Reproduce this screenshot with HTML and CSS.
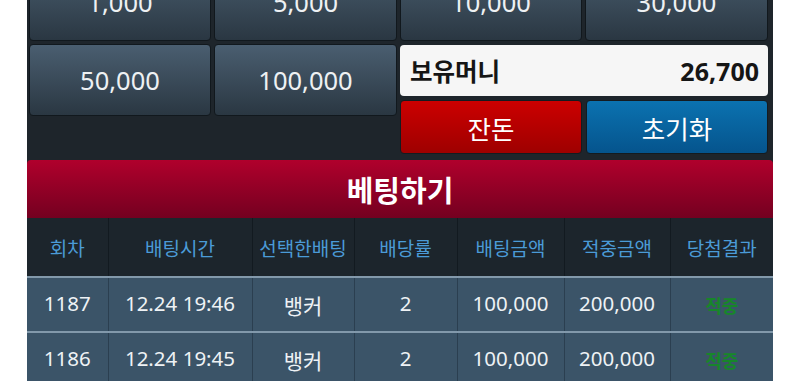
FILE: index.html
```html
<!DOCTYPE html>
<html lang="ko">
<head>
<meta charset="utf-8">
<title>베팅하기</title>
<link rel="stylesheet" href="styles.css">
</head>
<body>
<div class="panel">
  <div class="pad">
    <button class="chip top">1,000</button>
    <button class="chip top">5,000</button>
    <button class="chip top">10,000</button>
    <button class="chip top">30,000</button>
    <button class="chip">50,000</button>
    <button class="chip">100,000</button>
    <div class="side">
      <div class="money"><span class="money-label">보유머니</span><span class="money-val">26,700</span></div>
      <div class="actions">
        <button class="act red">잔돈</button>
        <button class="act blue">초기화</button>
      </div>
    </div>
  </div>
  <div class="title">베팅하기</div>
  <table class="hist">
    <colgroup>
      <col class="c1"><col class="c2"><col class="c3"><col class="c4"><col class="c5"><col class="c6"><col class="c7">
    </colgroup>
    <thead>
      <tr><th>회차</th><th>배팅시간</th><th>선택한배팅</th><th>배당률</th><th>배팅금액</th><th>적중금액</th><th>당첨결과</th></tr>
    </thead>
    <tbody>
      <tr><td>1187</td><td>12.24 19:46</td><td class="ko">뱅커</td><td>2</td><td>100,000</td><td>200,000</td><td class="win">적중</td></tr>
      <tr><td>1186</td><td>12.24 19:45</td><td class="ko">뱅커</td><td>2</td><td>100,000</td><td>200,000</td><td class="win">적중</td></tr>
    </tbody>
  </table>
</div>
</body>
</html>
```

FILE: styles.css
```css
html, body {
  margin: 0;
  padding: 0;
  background: #ffffff;
  font-family: "Noto Sans", "Noto Sans CJK KR", sans-serif;
}
.panel {
  margin: -39px 0 0 27px;
  width: 746px;
  background: #1e252b;
  padding-top: 2px;
}
.pad {
  display: grid;
  grid-template-columns: 182px 183px 182px 183px;
  grid-template-rows: 78px 110px;
  gap: 3px;
  padding: 0 5px 6px 2px;
}
.chip {
  font-family: inherit;
  height: 72px;
  align-self: start;
  border: 1px solid #11181d;
  border-radius: 4px;
  background: linear-gradient(#4a5e70, #2a3742);
  color: #eef1f3;
  font-size: 25.5px;
  padding: 0;
}
.chip.top {
  height: 78px;
}
.side {
  grid-column: 3 / span 2;
  display: flex;
  flex-direction: column;
  padding-top: 1px;
  gap: 4px;
}
.money {
  height: 51px;
  background: #f6f6f6;
  border-radius: 4px;
  display: flex;
  align-items: center;
  justify-content: space-between;
  padding: 0 9px 0 10px;
  color: #151515;
  font-weight: 700;
}
.money-label {
  font-family: "Noto Sans CJK KR", sans-serif;
  font-size: 24.5px;
}
.money-val {
  font-size: 25px;
}
.actions {
  display: grid;
  grid-template-columns: 1fr 1fr;
  gap: 4px;
}
.act {
  height: 54px;
  border: 1px solid #141b20;
  border-radius: 4px;
  color: #ffffff;
  font-family: "Noto Sans CJK KR", sans-serif;
  font-size: 25.5px;
  padding: 0;
}
.red { background: linear-gradient(#cc0000, #9e0000); }
.blue { background: linear-gradient(#0b72b0, #05548d); }
.title {
  height: 58px;
  border-radius: 4px 4px 0 0;
  background: linear-gradient(#b0002c, #740020);
  color: #ffffff;
  font-family: "Noto Sans CJK KR", sans-serif;
  font-weight: 700;
  font-size: 29px;
  display: flex;
  align-items: center;
  justify-content: center;
}
.hist {
  width: 746px;
  border-collapse: collapse;
  table-layout: fixed;
}
.c1 { width: 81px; }
.c2 { width: 144px; }
.c3 { width: 102px; }
.c4 { width: 103px; }
.c5 { width: 107px; }
.c6 { width: 106px; }
.c7 { width: 103px; }
.hist th {
  height: 58px;
  background: #1c252c;
  color: #4b9bd7;
  font-family: "Noto Sans CJK KR", sans-serif;
  font-weight: 400;
  font-size: 19px;
  white-space: nowrap;
  border-left: 1px solid #121a20;
  border-bottom: 2px solid #8299ab;
  padding: 0;
}
.hist td {
  height: 50px;
  background: #3b5468;
  color: #eef2f5;
  font-size: 20.5px;
  text-align: center;
  border-left: 1px solid #2b3f50;
  border-bottom: 2px solid #8299ab;
  padding: 0 0 3px;
}
.hist th:first-child, .hist td:first-child { border-left: none; }
.hist td.ko {
  font-family: "Noto Sans CJK KR", sans-serif;
  font-size: 21px;
  padding: 2px 0 1px;
}
.hist td.win {
  font-family: "Noto Sans CJK KR", sans-serif;
  font-size: 18px;
  font-weight: 700;
  color: #17862a;
  padding: 2px 0 1px;
}
```
